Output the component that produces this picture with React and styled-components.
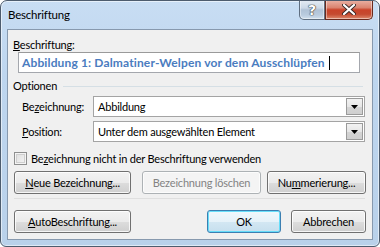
import React, { useState } from "react";
import styled, { createGlobalStyle } from "styled-components";

const GlobalStyle = createGlobalStyle`
  html, body {
    margin: 0;
    padding: 0;
    background: #ffffff;
  }
  * {
    box-sizing: border-box;
  }
`;

const FONT = `Lato, "Open Sans", "DejaVu Sans", sans-serif`;

const Window = styled.div`
  width: 380px;
  height: 247px;
  border: 1px solid #4d5c6e;
  border-radius: 7px 7px 6px 6px;
  background: linear-gradient(180deg, #c8ddf3 0%, #bed6ef 30%, #b9d1ea 100%);
  box-shadow: inset 0 0 0 1px rgba(255, 255, 255, 0.55);
  font-family: ${FONT};
  font-size: 11px;
  letter-spacing: -0.2px;
  color: #000;
  overflow: hidden;
`;

const TitleBar = styled.div`
  height: 28px;
  display: flex;
  align-items: flex-start;
  padding-left: 7px;
`;

const Title = styled.div`
  flex: 1;
  line-height: 28px;
  font-size: 11.5px;
  color: #000;
`;

const CaptionButtons = styled.div`
  display: flex;
  margin-right: 6px;
  margin-top: -1px;
`;

const CaptionButton = styled.div`
  width: ${(p) => p.$w}px;
  height: 20px;
  display: flex;
  align-items: center;
  justify-content: center;
  border: 1px solid ${(p) => (p.$close ? "#6a2a1e" : "#5f6e80")};
  border-top: none;
  border-radius: ${(p) => (p.$close ? "0 0 5px 0" : "0 0 0 5px")};
  background: ${(p) =>
    p.$close
      ? "linear-gradient(180deg, #eab3a6 0%, #da8470 40%, #c9432a 52%, #c54a30 75%, #dd8a6e 100%)"
      : "linear-gradient(180deg, #e5ecf4 0%, #ccd9e7 42%, #b0c2d6 52%, #b9cbde 78%, #d0dfee 100%)"};
  box-shadow: inset 0 0 0 1px rgba(255, 255, 255, 0.45);
  color: #fff;
  font-weight: bold;
  font-size: 14px;
  letter-spacing: 0;
  font-family: "DejaVu Sans", sans-serif;
  text-shadow: 0 0 1px #333, 0 0 1px #333, 0 0 1px #333;
`;

const Client = styled.div`
  margin: 0 6px 6px 6px;
  height: 211px;
  border: 1px solid #8799ae;
  background: #f0f0f0;
  padding: 0 6px 0 5px;
`;

const Label = styled.div`
  line-height: 15px;
  height: 15px;
  margin-top: ${(p) => p.$mt || 0}px;
  white-space: nowrap;
`;

const Key = styled.span`
  text-decoration: underline;
  text-underline-offset: 1px;
`;

const TextInput = styled.div`
  margin-left: 5px;
  width: 342px;
  height: 21px;
  border: 1px solid #a4a7ad;
  border-top-color: #9a9a9a;
  background: #fff;
  display: flex;
  align-items: center;
  padding-left: 3px;
  color: #4a7cc0;
  font-weight: bold;
  font-size: 12px;
  letter-spacing: 0.14px;
  white-space: nowrap;
`;

const Caret = styled.span`
  display: inline-block;
  width: 1px;
  height: 14px;
  background: #000;
  margin-left: 4px;
`;

const GroupHeader = styled.div`
  margin-top: 5px;
  height: 15px;
  display: flex;
  align-items: center;
  gap: 6px;
  margin-right: 3px;
  line-height: 15px;
`;

const GroupLine = styled.div`
  flex: 1;
  height: 1px;
  background: #d5dfe5;
  margin-top: 1px;
`;

const FieldRow = styled.div`
  display: flex;
  align-items: center;
  margin-top: ${(p) => p.$mt}px;
  padding-left: 9px;
`;

const FieldLabel = styled.div`
  width: 71px;
  white-space: nowrap;
`;

const Combo = styled.div`
  width: 272px;
  height: 21px;
  border: 1px solid #a4a4a4;
  background: #fff;
  display: flex;
  align-items: center;
  justify-content: space-between;
  padding-left: 4px;
  padding-right: 1px;
`;

const ComboButton = styled.div`
  width: 17px;
  height: 17px;
  border: 1px solid #9a9a9a;
  background: linear-gradient(180deg, #f2f2f2 0%, #e6e6e6 50%, #d4d4d4 51%, #cfcfcf 100%);
  display: flex;
  align-items: center;
  justify-content: center;
`;

const CheckRow = styled.label`
  display: flex;
  align-items: center;
  margin-top: 9px;
  margin-left: 1px;
  height: 15px;
  gap: 4px;
  white-space: nowrap;
`;

const CheckBox = styled.div`
  width: 13px;
  height: 13px;
  border: 1px solid #8e8f8f;
  background: linear-gradient(135deg, #dcdcdc 0%, #f6f6f6 100%);
  box-shadow: inset 0 0 0 1px #f4f4f4, inset 0 0 0 2px #cfcfcf;
`;

const ButtonRow = styled.div`
  display: flex;
  margin-top: ${(p) => p.$mt}px;
  margin-left: 1px;
`;

const Button = styled.div`
  width: ${(p) => p.$w}px;
  height: 23px;
  margin-left: ${(p) => p.$ml || 0}px;
  border: 1px solid ${(p) => (p.$default ? "#3c7fb1" : p.$disabled ? "#adb2b5" : "#707070")};
  border-radius: 3px;
  background: ${(p) =>
    p.$disabled
      ? "#f4f4f4"
      : p.$default
      ? "linear-gradient(180deg, #f0f8fc 0%, #e6f2f9 50%, #d3e7f3 51%, #c6dfee 100%)"
      : "linear-gradient(180deg, #f2f2f2 0%, #ebebeb 50%, #dddddd 51%, #cfcfcf 100%)"};
  box-shadow: inset 0 0 0 1px
    ${(p) => (p.$default ? "rgba(90, 220, 250, 0.9)" : p.$disabled ? "#fcfcfc" : "rgba(255,255,255,0.8)")};
  color: ${(p) => (p.$disabled ? "#838383" : "#000")};
  display: flex;
  align-items: center;
  justify-content: center;
  white-space: nowrap;
  line-height: 15px;
`;

const Separator = styled.div`
  height: 1px;
  margin: 4px 0 0 1px;
  width: 351px;
  background: #dfdfdf;
`;

const Spacer = styled.div`
  flex: 1;
`;

function Arrow() {
  return (
    <svg width="7" height="4" viewBox="0 0 7 4">
      <path d="M0 0 H7 L3.5 4 Z" fill="#000" />
    </svg>
  );
}

function CloseGlyph() {
  return (
    <svg width="14" height="11" viewBox="0 0 14 11">
      <path d="M2 1 L12 10 M12 1 L2 10" stroke="#3a2a28" strokeWidth="4" strokeLinecap="round" />
      <path d="M2 1 L12 10 M12 1 L2 10" stroke="#ffffff" strokeWidth="2.2" strokeLinecap="round" />
    </svg>
  );
}

export default function App() {
  const [checked, setChecked] = useState(false);

  return (
    <>
      <GlobalStyle />
      <Window>
        <TitleBar>
          <Title>Beschriftung</Title>
          <CaptionButtons>
            <CaptionButton $w={26}>?</CaptionButton>
            <CaptionButton $w={48} $close>
              <CloseGlyph />
            </CaptionButton>
          </CaptionButtons>
        </TitleBar>
        <Client>
          <Label $mt={7}>
            <Key>B</Key>eschriftung:
          </Label>
          <TextInput>
            Abbildung 1: Dalmatiner-Welpen vor dem Ausschlüpfen
            <Caret />
          </TextInput>

          <GroupHeader>
            Optionen
            <GroupLine />
          </GroupHeader>

          <FieldRow $mt={3}>
            <FieldLabel>
              Be<Key>z</Key>eichnung:
            </FieldLabel>
            <Combo>
              Abbildung
              <ComboButton>
                <Arrow />
              </ComboButton>
            </Combo>
          </FieldRow>
          <FieldRow $mt={4}>
            <FieldLabel>
              <Key>P</Key>osition:
            </FieldLabel>
            <Combo>
              Unter dem ausgewählten Element
              <ComboButton>
                <Arrow />
              </ComboButton>
            </Combo>
          </FieldRow>

          <CheckRow onClick={() => setChecked(!checked)}>
            <CheckBox />
            <span>
              Be<Key>z</Key>eichnung nicht in der Beschriftung verwenden
            </span>
          </CheckRow>

          <ButtonRow $mt={5}>
            <Button $w={117}>
              <Key>N</Key>eue Bezeichnung...
            </Button>
            <Button $w={119} $ml={11} $disabled>
              Bezeichnung löschen
            </Button>
            <Button $w={99} $ml={6}>
              Nu<Key>m</Key>merierung...
            </Button>
          </ButtonRow>

          <Separator />

          <ButtonRow $mt={11}>
            <Button $w={117}>
              <Key>A</Key>utoBeschriftung...
            </Button>
            <Spacer />
            <Button $w={74} $default>
              OK
            </Button>
            <Button $w={75} $ml={10}>
              Abbrechen
            </Button>
          </ButtonRow>
        </Client>
      </Window>
    </>
  );
}
